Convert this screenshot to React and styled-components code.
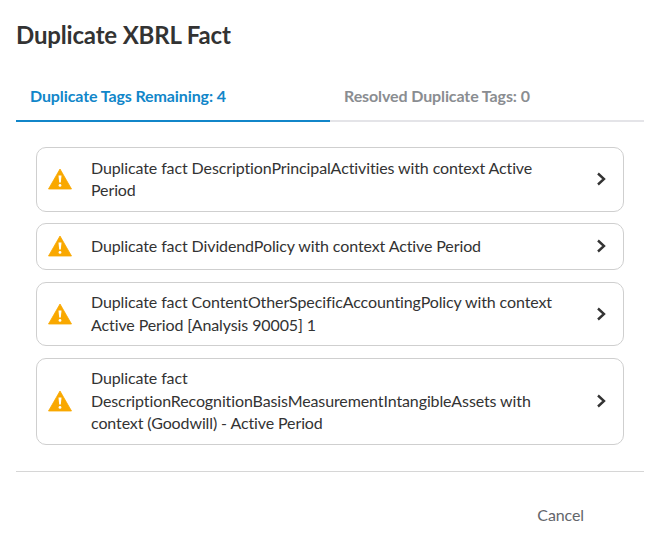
import React from 'react'
import styled, { createGlobalStyle } from 'styled-components'

const GlobalStyle = createGlobalStyle`
  html, body {
    margin: 0;
    padding: 0;
    background: #fff;
    font-family: Lato, "Open Sans", sans-serif;
  }
`

const Modal = styled.div`
  width: 654px;
  height: 548px;
  box-sizing: border-box;
  padding: 0 10px 0 16px;
  display: flex;
  flex-direction: column;
`

const Title = styled.h1`
  margin: 0;
  padding: 20px 0 0;
  font-size: 24px;
  line-height: 30px;
  font-weight: 700;
  letter-spacing: -0.17px;
  color: #333;
`

const Tabs = styled.div`
  display: flex;
  margin-top: 27px;
  height: 43px;
  border-bottom: 2px solid #e4e4e8;
`

const Tab = styled.div`
  flex: 0 0 314px;
  box-sizing: border-box;
  height: 45px;
  padding: 4px 14px 0;
  font-size: 16px;
  line-height: 30px;
  font-weight: 700;
  letter-spacing: -0.11px;
  color: ${({ $active }) => ($active ? '#1186c9' : '#8a8d91')};
  border-bottom: 2px solid ${({ $active }) => ($active ? '#1186c9' : 'transparent')};
`

const List = styled.div`
  display: flex;
  flex-direction: column;
  gap: 11.5px;
  padding: 25px 20px 26px;
`

const Card = styled.div`
  display: flex;
  align-items: center;
  box-sizing: border-box;
  min-height: 46.8px;
  padding: 8.6px 14px 9.4px 11px;
  border: 1px solid #cfcfcf;
  border-radius: 10px;
`

const Warning = styled.svg`
  flex: none;
  width: 24px;
  height: 22px;
`

const Message = styled.div`
  flex: 1;
  margin-left: 19px;
  padding-right: 30px;
  font-size: 16px;
  line-height: 22.4px;
  letter-spacing: -0.11px;
  color: #333;
`

const Chevron = styled.svg`
  flex: none;
  width: 16px;
  height: 16px;
`

const Footer = styled.div`
  display: flex;
  justify-content: flex-end;
  border-top: 1px solid #d6d6d6;
  padding: 32px 60px 0 0;
`

const CancelButton = styled.button`
  border: 0;
  background: none;
  padding: 0;
  font: 400 16px/22px Lato, sans-serif;
  letter-spacing: -0.1px;
  color: #63666b;
`

const facts = [
  'Duplicate fact DescriptionPrincipalActivities with context Active Period',
  'Duplicate fact DividendPolicy with context Active Period',
  'Duplicate fact ContentOtherSpecificAccountingPolicy with context Active Period [Analysis 90005] 1',
  'Duplicate fact DescriptionRecognitionBasisMeasurementIntangibleAssets with context (Goodwill) - Active Period',
]

export default function App() {
  return (
    <>
      <GlobalStyle />
      <Modal>
        <Title>Duplicate XBRL Fact</Title>
        <Tabs>
          <Tab $active>Duplicate Tags Remaining: 4</Tab>
          <Tab>Resolved Duplicate Tags: 0</Tab>
        </Tabs>
        <List>
          {facts.map((fact) => (
            <Card key={fact}>
              <Warning viewBox="0 0 24 22">
                <path d="M12 1 L23.5 21 H0.5 Z" fill="#f9a800" stroke="#f9a800" strokeWidth="0.8" strokeLinejoin="round" />
                <path d="M10.5 7.5 h3 l-.7 7 h-1.6 z" fill="#fff" />
                <circle cx="12" cy="17.4" r="1.4" fill="#fff" />
              </Warning>
              <Message>{fact}</Message>
              <Chevron viewBox="0 0 16 16">
                <path d="M5 2.5 L11 8 L5 13.5" fill="none" stroke="#333" strokeWidth="2.4" />
              </Chevron>
            </Card>
          ))}
        </List>
        <Footer>
          <CancelButton>Cancel</CancelButton>
        </Footer>
      </Modal>
    </>
  )
}
